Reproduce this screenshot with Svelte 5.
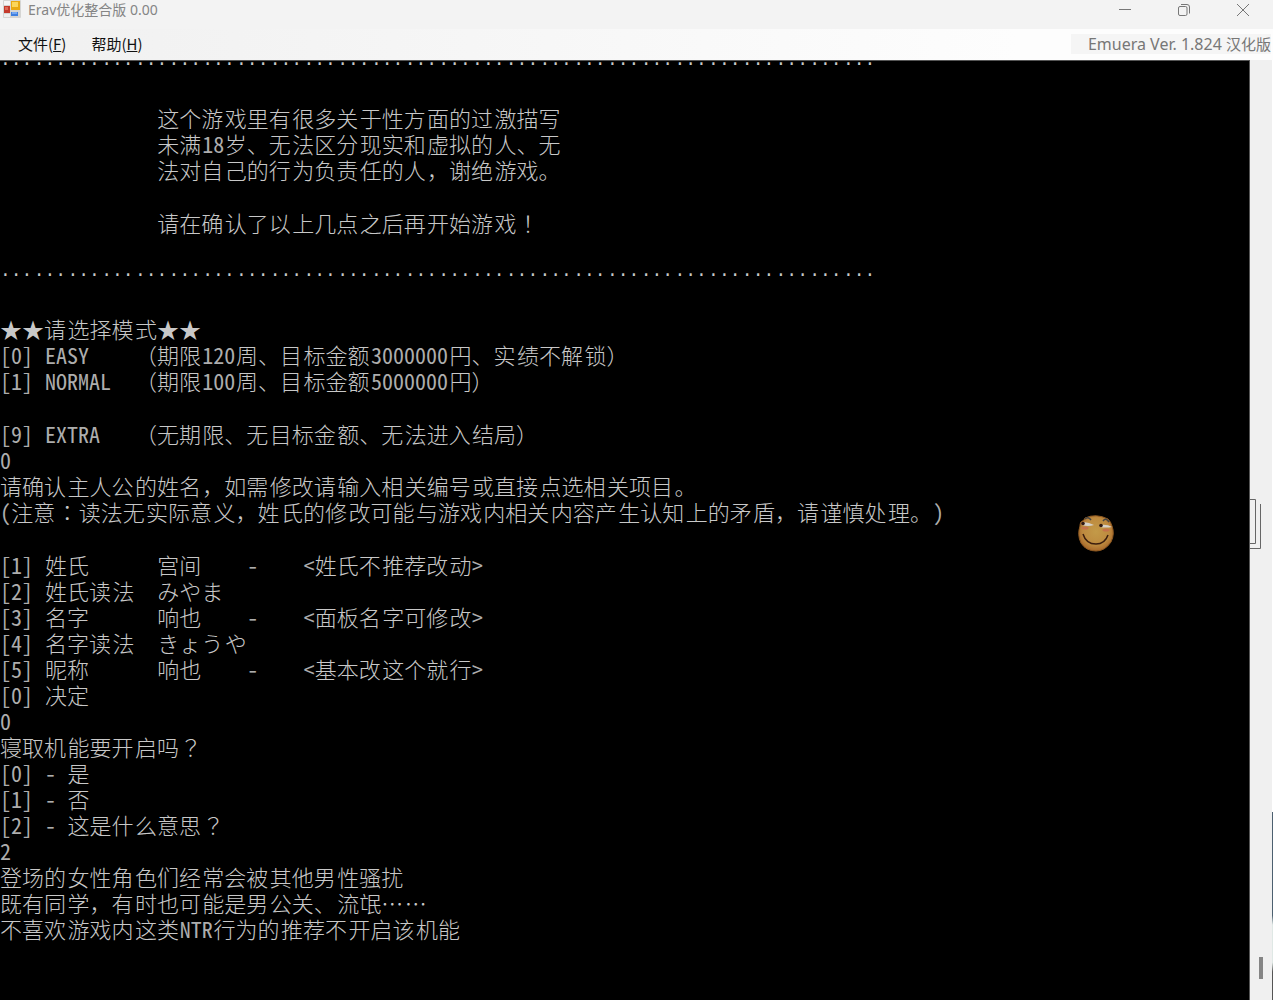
<script>
  const dots = '·'.repeat(78);
  const pad = ' '.repeat(14);
  const source = [
    dots,
    '',
    pad + '这个游戏里有很多关于性方面的过激描写',
    pad + '未满18岁、无法区分现实和虚拟的人、无',
    pad + '法对自己的行为负责任的人，谢绝游戏。',
    '',
    pad + '请在确认了以上几点之后再开始游戏！',
    '',
    dots,
    '',
    '★★请选择模式★★',
    '[0] EASY    （期限120周、目标金额3000000円、实绩不解锁）',
    '[1] NORMAL  （期限100周、目标金额5000000円）',
    '',
    '[9] EXTRA   （无期限、无目标金额、无法进入结局）',
    '0',
    '请确认主人公的姓名，如需修改请输入相关编号或直接点选相关项目。',
    '(注意：读法无实际意义，姓氏的修改可能与游戏内相关内容产生认知上的矛盾，请谨慎处理。)',
    '',
    '[1] 姓氏      宫间    -    <姓氏不推荐改动>',
    '[2] 姓氏读法  みやま',
    '[3] 名字      响也    -    <面板名字可修改>',
    '[4] 名字读法  きょうや',
    '[5] 昵称      响也    -    <基本改这个就行>',
    '[0] 决定',
    '0',
    '寝取机能要开启吗？',
    '[0] - 是',
    '[1] - 否',
    '[2] - 这是什么意思？',
    '2',
    '登场的女性角色们经常会被其他男性骚扰',
    '既有同学，有时也可能是男公关、流氓……',
    '不喜欢游戏内这类NTR行为的推荐不开启该机能'
  ];

  // Splits a line into runs and gives each its column on the half-width cell grid.
  function layout(line) {
    const runs = [];
    let column = 1;
    for (const [text] of line.matchAll(/ +|[!-~]+|·{1,3}|[：！？]|[^ -~·：！？]{1,3}/g)) {
      const half = /^[ -~·]/.test(text);
      const span = half ? text.length : text.length * 2;
      if (text[0] !== ' ') {
        const kind = text[0] === '·' ? 'dots' : half ? 'half' : /[：！？]/.test(text) ? 'mid' : 'full';
        runs.push({ text, column, span, kind });
      }
      column += span;
    }
    return runs;
  }

  const lines = source.map((text) => ({ runs: layout(text), option: /^\[\d\]/.test(text) }));
</script>

{#snippet cells(runs)}
  {#each runs as run}<span class={run.kind} style="grid-column: {run.column} / span {run.span}">{run.text}</span>{/each}
{/snippet}

<div class="window">
  <header class="titlebar">
    <svg class="app-icon" width="18" height="18" viewBox="0 0 18 18" aria-hidden="true">
      <rect x="0" y="0" width="18" height="18" rx="1" fill="#d5d5d3" />
      <rect x="1" y="1" width="6" height="4" fill="#f5f5f5" />
      <rect x="1" y="6" width="6" height="7" fill="#c43a2c" />
      <rect x="2" y="7" width="3" height="3" fill="#df6a58" />
      <rect x="8" y="1" width="9" height="9" fill="#e9a912" />
      <rect x="9" y="2" width="6" height="5" fill="#fbd65a" />
      <rect x="8" y="12" width="7" height="4" fill="#3f7fe0" />
      <rect x="9" y="12" width="5" height="2" fill="#75a8f2" />
      <rect x="1" y="14" width="6" height="3" fill="#eeeeee" />
    </svg>
    <h1>Erav优化整合版 0.00</h1>
    <div class="controls">
      <button aria-label="最小化"><svg width="14" height="14" viewBox="0 0 14 14"><path d="M1 6.5H13" /></svg></button>
      <button aria-label="还原"><svg width="14" height="14" viewBox="0 0 14 14"><rect x="1.5" y="3.5" width="8.5" height="9" rx="1.5" /><path d="M4 1.5H10Q12.5 1.5 12.5 4V10.5" /></svg></button>
      <button aria-label="关闭"><svg width="14" height="14" viewBox="0 0 14 14"><path d="M1 1L13 13M13 1L1 13" /></svg></button>
    </div>
  </header>

  <nav class="menubar">
    <button>文件(<u>F</u>)</button>
    <button>帮助(<u>H</u>)</button>
    <span class="version">Emuera Ver. 1.824 <span class="edition">汉化版</span></span>
  </nav>

  <main>
    <div class="console">
      {#each lines as line}
        {#if line.option}
          <button class="line">{@render cells(line.runs)}</button>
        {:else}
          <div class="line" class:blank={line.runs.length === 0}>{@render cells(line.runs)}</div>
        {/if}
      {/each}
    </div>
    <div class="gutter"><div class="thumb"></div></div>
    <div class="edge"></div>

    <svg class="face" width="38" height="38" viewBox="0 0 38 38" aria-hidden="true">
      <defs>
        <radialGradient id="skin" cx="50%" cy="45%" r="55%">
          <stop offset="0" stop-color="#c39a48" />
          <stop offset="0.7" stop-color="#bd8a3f" />
          <stop offset="1" stop-color="#a8682a" />
        </radialGradient>
      </defs>
      <path d="M8 4Q19 -1 31 5Q34 8 35 12Q38 20 34 28Q28 37 19 37Q9 37 4 29Q0 21 3 12Q2 8 7 6Z" fill="url(#skin)" stroke="#8f5a22" />
      <path d="M4 9Q9 7 17 11Q11 13 5 11Z" fill="#d5d0c8" />
      <path d="M23 11Q30 10 35 13Q29 14 23 13Z" fill="#d5d0c8" />
      <circle cx="6" cy="9.500" r="1.800" fill="#2e1712" />
      <circle cx="24" cy="11.500" r="1.800" fill="#2e1712" />
      <path d="M8 5Q11 2 14 6M26 7Q29 3 32 8" fill="none" stroke="#444" stroke-width="1.5" />
      <ellipse cx="8" cy="14" rx="3.500" ry="1.500" fill="#c4714a" />
      <ellipse cx="29" cy="16" rx="3.500" ry="1.500" fill="#c4714a" />
      <path d="M6 20Q9 30 19 30Q28 30 31 21" fill="none" stroke="#3c1e0e" stroke-width="1.500" />
    </svg>
    <svg class="bracket" width="12" height="52" viewBox="0 0 12 52" aria-hidden="true">
      <path d="M0 1.500H5.500V45.500H0M0 50.500H10.500V6" />
    </svg>
  </main>
</div>

<style>
  :global(body) {
    margin: 0;
  }

  .window {
    display: flex;
    flex-direction: column;
    height: 100vh;
    overflow: hidden;
    background: #f3f3f3;
    font-family: 'Noto Sans CJK SC', sans-serif;
  }

  button {
    border: 0;
    padding: 0;
    background: none;
    color: inherit;
    font: inherit;
    text-align: left;
  }

  .titlebar {
    display: flex;
    flex: none;
    align-items: flex-start;
    height: 29px;
    padding: 0 1px 0 3px;
  }

  h1 {
    flex: 1;
    margin: 0;
    padding-left: 7px;
    color: #858585;
    font-family: 'Noto Sans', 'Noto Sans CJK SC', sans-serif;
    font-size: 14px;
    font-weight: 400;
    line-height: 20px;
  }

  .controls {
    display: flex;
  }

  .controls button {
    display: flex;
    justify-content: center;
    align-items: center;
    width: 59px;
    height: 20px;
  }

  .controls svg {
    fill: none;
    stroke: #777;
  }

  .menubar {
    display: flex;
    flex: none;
    align-items: center;
    gap: 25px;
    height: 29px;
    padding: 0 2px 2px 18px;
    background: linear-gradient(90deg, #f0f0f0, #fdfdfd 80%);
    color: #111;
    font-size: 15px;
    line-height: 20px;
  }

  .version {
    margin-left: auto;
    padding-left: 17px;
    background: #f5f5f5;
    color: #777;
    font-family: 'Noto Sans', 'Noto Sans CJK SC', sans-serif;
    font-size: 16px;
  }

  .edition {
    font-size: 15px;
  }

  main {
    position: relative;
    display: flex;
    flex: 1;
    min-height: 0;
  }

  .console {
    flex: 1;
    overflow: hidden;
    border: solid #555;
    border-width: 1px 1px 0 0;
    background: #000;
    color: #c8c8c8;
    font-size: 22px;
    font-weight: 300;
  }

  .line {
    display: grid;
    grid-template-columns: repeat(100, minmax(0, 1fr));
    width: 1124px;
    height: 26px;
    line-height: 26px;
    white-space: nowrap;
  }

  .line:first-child {
    height: 16px;
    line-height: 6px;
  }

  .blank {
    height: 27px;
  }

  .half {
    color: #adadad;
    font-family: 'Noto Sans Mono CJK SC', 'Noto Sans CJK SC', monospace;
  }

  .dots {
    font-family: 'Liberation Mono', monospace;
    font-size: 18px;
  }

  .mid {
    font-family: 'Noto Sans CJK TC', sans-serif;
  }

  .gutter {
    display: flex;
    flex: none;
    flex-direction: column;
    justify-content: flex-end;
    align-items: center;
    width: 22px;
    background: #f0f0f0;
  }

  .thumb {
    width: 4px;
    height: 22px;
    margin-bottom: 21px;
    background: #858585;
  }

  .edge {
    flex: none;
    width: 1px;
    background: linear-gradient(#fff 80%, #4c6070 80%, #4c6070 91%, #dfe8e5 92%, #dfe8e5 96%, #555 97%);
  }

  .face {
    position: absolute;
    top: 454px;
    right: 158px;
  }

  .bracket {
    position: absolute;
    top: 438px;
    right: 11px;
    fill: none;
    stroke: #666;
  }
</style>
